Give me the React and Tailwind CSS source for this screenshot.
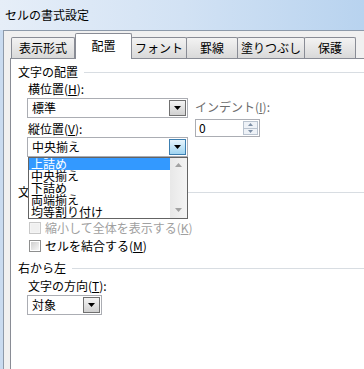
import React from 'react';

const Arrow = ({ up = false, color = '#000', w = 7, h = 4 }) => (
  <svg width={w} height={h} viewBox={`0 0 ${w} ${h}`}>
    <path d={up ? `M0 ${h}H${w}L${w / 2} 0z` : `M0 0H${w}L${w / 2} ${h}z`} fill={color} />
  </svg>
);

function Tab({ label, selected, w }) {
  if (selected) {
    return (
      <div className={`${w} h-[26px] -mb-px relative z-10 bg-white border border-b-0 border-[#898c95] rounded-t-[2px] flex items-center justify-center pb-[2px]`}>
        {label}
      </div>
    );
  }
  return (
    <div className={`${w} h-[21px] -ml-px first:ml-px border border-b-0 border-[#898c95] rounded-t-[2px] bg-linear-to-b from-[#f3f3f3] to-[#d9d9d9] flex items-center justify-center`}>
      {label}
    </div>
  );
}

function GroupHeader({ label, lineClass = 'ml-[6px]' }) {
  return (
    <div className="flex items-center h-[14px] leading-[14px]">
      <span>{label}</span>
      <div className={`flex-1 h-px bg-[#d8dde2] ${lineClass}`} />
    </div>
  );
}

function ComboButton({ active }) {
  return (
    <div
      className={`absolute right-px top-px bottom-px w-[17px] border flex items-center justify-center ${
        active
          ? 'border-[#3c7fb1] bg-linear-to-b from-[#e8f5fc] to-[#9fd4f1]'
          : 'border-[#707070] bg-linear-to-b from-[#f4f4f4] to-[#d0d0d0]'
      }`}
    >
      <Arrow />
    </div>
  );
}

function Combo({ value, w, active, children }) {
  return (
    <div className={`relative ${w} h-[20px] -ml-px border border-[#abadb3] bg-white flex items-center pl-[4px] leading-[14px]`}>
      <span>{value}</span>
      <ComboButton active={active} />
      {children}
    </div>
  );
}

function Checkbox({ disabled }) {
  return (
    <div className={`w-[12px] h-[12px] border flex items-center justify-center ${disabled ? 'border-[#c8c8c8] bg-[#f4f4f4]' : 'border-[#8e8f8f] bg-white'}`}>
      <div className={`w-[8px] h-[8px] ${disabled ? 'bg-[#f0f0f0]' : 'bg-linear-to-br from-[#cfcfcf] to-[#f6f6f6]'}`} />
    </div>
  );
}

export default function App() {
  const items = ['上詰め', '中央揃え', '下詰め', '両端揃え', '均等割り付け'];

  return (
    <div className="w-[364px] h-[369px] overflow-hidden flex flex-col text-[12px] text-black font-['Noto_Sans_CJK_JP',sans-serif] bg-[#c9dbf0]">
      {/* title bar */}
      <div className="h-[30px] shrink-0 flex items-center pl-[5px] pb-[1px] bg-linear-to-r from-[#e6eef8] via-[#d2e2f4] to-[#b8d3ef]">
        セルの書式設定
      </div>

      <div className="flex-1 flex pl-[3px]">
        <div className="flex-1 flex flex-col bg-[#f0f0f0] border-l border-t border-[#8d9aaa] pl-[6px] pt-[2px]">
          {/* tabs */}
          <div className="h-[25px] flex items-end">
            <Tab label="表示形式" w="w-[64px]" />
            <Tab label="配置" w="w-[57px]" selected />
            <Tab label="フォント" w="w-[56px]" />
            <Tab label="罫線" w="w-[52px]" />
            <Tab label="塗りつぶし" w="w-[68px]" />
            <Tab label="保護" w="w-[52px]" />
          </div>

          {/* panel */}
          <div className="flex-1 bg-white border-l border-t border-[#898c95] pl-[7px] pt-[6px]">
            <GroupHeader label="文字の配置" />

            <div className="flex pl-[10px] mt-[3px]">
              <div className="flex flex-col w-[160px]">
                <div className="h-[14px] leading-[14px]">
                  横位置(<span className="underline">H</span>):
                </div>
                <div className="mt-[2px]">
                  <Combo value="標準" w="w-[161px]" />
                </div>
                <div className="h-[14px] leading-[14px] mt-[4px]">
                  縦位置(<span className="underline">V</span>):
                </div>
                <div className="mt-[1px] relative z-20">
                  <Combo value="中央揃え" w="w-[161px]" active>
                    {/* dropdown list */}
                    <div className="absolute left-0 top-[19px] w-[160px] h-[62px] border border-[#646464] bg-white flex">
                      <div className="flex-1 flex flex-col">
                        {items.map((it, i) => (
                          <div
                            key={it}
                            className={`pl-[2px] leading-[12px] ${i === 0 ? 'h-[13px] bg-[#3399ff] text-white' : 'h-[12px]'}`}
                          >
                            {it}
                          </div>
                        ))}
                      </div>
                      <div className="w-[17px] bg-linear-to-r from-[#e8e8e8] to-[#f4f4f4] flex flex-col items-center justify-between pt-[5px] pb-[6px]">
                        <Arrow up color="#a2a2a2" />
                        <Arrow color="#a2a2a2" />
                      </div>
                    </div>
                  </Combo>
                </div>
              </div>

              <div className="flex flex-col ml-[7px] mt-[18px]">
                <div className="h-[14px] leading-[14px] text-[#6d6d6d]">
                  インデント(<span className="underline">I</span>):
                </div>
                <div className="mt-[5px] w-[65px] h-[18px] border border-[#abadb3] bg-white flex items-center relative leading-[14px] pl-[3px]">
                  0
                  <div className="absolute right-px top-px bottom-px w-[15px] flex flex-col border border-[#b9c3cf] bg-[#eef2f7]">
                    <div className="flex-1 flex items-center justify-center border-b border-[#b9c3cf]">
                      <Arrow up color="#7d8fa6" w={5} h={3} />
                    </div>
                    <div className="flex-1 flex items-center justify-center">
                      <Arrow color="#7d8fa6" w={5} h={3} />
                    </div>
                  </div>
                </div>
              </div>
            </div>

            <div className="mt-[28px]">
              <GroupHeader label="文字の制御" />
            </div>

            <div className="pl-[11px] flex flex-col">
              <div className="mt-[4px] h-[14px] w-[159px] overflow-hidden flex items-center gap-[4px] leading-[14px] whitespace-nowrap">
                <Checkbox />
                <span>折り返して全体を表示する(<span className="underline">W</span>)</span>
              </div>
              <div className="mt-[4px] h-[14px] flex items-center gap-[4px] leading-[14px] text-[#a0a0a0]">
                <Checkbox disabled />
                <span>縮小して全体を表示する(<span className="underline">K</span>)</span>
              </div>
              <div className="mt-[4px] h-[14px] flex items-center gap-[4px] leading-[14px]">
                <Checkbox />
                <span>セルを結合する(<span className="underline">M</span>)</span>
              </div>
            </div>

            <div className="mt-[8px]">
              <GroupHeader label="右から左" />
            </div>

            <div className="pl-[10px] flex flex-col">
              <div className="mt-[4px] h-[14px] leading-[14px]">
                文字の方向(<span className="underline">T</span>):
              </div>
              <div className="mt-[2px]">
                <Combo value="対象" w="w-[75px]" />
              </div>
            </div>
          </div>
        </div>
      </div>
    </div>
  );
}
